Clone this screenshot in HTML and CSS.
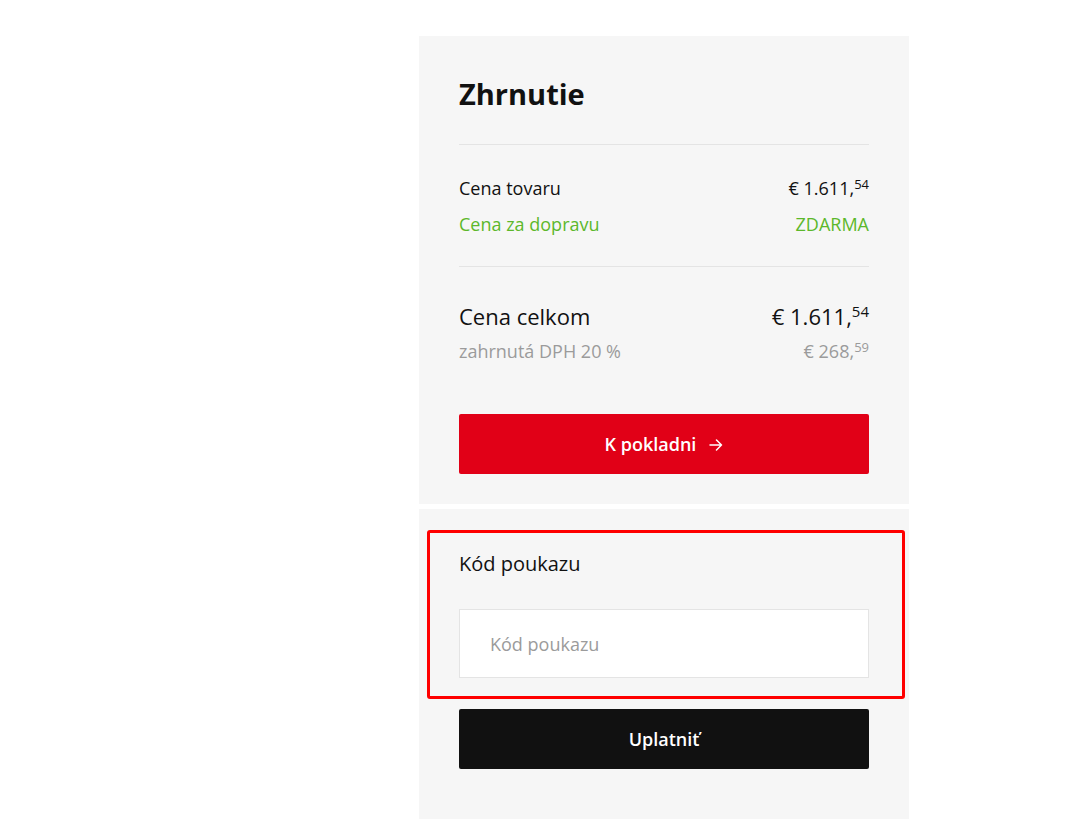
FILE: index.html
```html
<!DOCTYPE html>
<html lang="sk">
<head>
<meta charset="utf-8">
<title>Zhrnutie</title>
<link rel="stylesheet" href="styles.css">
</head>
<body>
<div class="page">
  <aside class="summary">
    <section class="panel panel-summary">
      <h2 class="title">Zhrnutie</h2>
      <div class="rows">
        <div class="row">
          <span>Cena tovaru</span>
          <span class="price">€ 1.611,<sup>54</sup></span>
        </div>
        <div class="row green">
          <span>Cena za dopravu</span>
          <span>ZDARMA</span>
        </div>
      </div>
      <div class="totals">
        <div class="row total">
          <span>Cena celkom</span>
          <span class="price">€ 1.611,<sup>54</sup></span>
        </div>
        <div class="row vat">
          <span>zahrnutá DPH 20 %</span>
          <span class="price">€ 268,<sup>59</sup></span>
        </div>
      </div>
      <button class="btn btn-red" type="button">K pokladni
        <svg class="arrow" width="14" height="12" viewBox="0 0 14 12" aria-hidden="true"><path d="M1 6h11.5M7.5 1l5 5-5 5" fill="none" stroke="#fff" stroke-width="1.5" stroke-linecap="round" stroke-linejoin="round"/></svg>
      </button>
    </section>
    <section class="panel panel-voucher">
      <div class="voucher-area">
        <div class="highlight"></div>
        <label class="voucher-label" for="kod">Kód poukazu</label>
        <input class="voucher-input" id="kod" type="text" placeholder="Kód poukazu">
      </div>
      <button class="btn btn-black" type="button">Uplatniť</button>
    </section>
  </aside>
</div>
</body>
</html>
```

FILE: styles.css
```css
* { box-sizing: border-box; }
html, body { margin: 0; padding: 0; background: #fff; }
body {
  font-family: "Open Sans", "Noto Sans", sans-serif;
  color: #111;
  font-size: 18px;
}
.page {
  padding: 36px 0 0 419px;
}
.summary {
  width: 490px;
  display: flex;
  flex-direction: column;
  gap: 5px;
}
.panel {
  background: #f6f6f6;
  padding: 40px 40px 30px;
}
.title {
  margin: 0;
  font-size: 29px;
  line-height: 36px;
  font-weight: 700;
  padding-bottom: 32px;
  border-bottom: 1px solid #e4e4e4;
}
.rows {
  padding: 31px 0 30px;
  display: flex;
  flex-direction: column;
  gap: 12px;
  border-bottom: 1px solid #e4e4e4;
}
.row {
  display: flex;
  justify-content: space-between;
  align-items: baseline;
  line-height: 24px;
}
.price sup {
  font-size: 13px;
  vertical-align: 0;
  position: relative;
  top: -6px;
  line-height: 0;
}
.green { color: #5cb82b; }
.totals {
  padding-top: 34px;
  display: flex;
  flex-direction: column;
  gap: 8px;
}
.total {
  font-size: 22px;
  line-height: 30px;
}
.total .price sup { font-size: 15px; top: -8px; }
.vat { color: #9b9b9b; }
.btn {
  display: flex;
  align-items: center;
  justify-content: center;
  gap: 13px;
  width: 100%;
  height: 60px;
  border: 0;
  border-radius: 2px;
  color: #fff;
  font-family: inherit;
  font-size: 18px;
  font-weight: 600;
  cursor: pointer;
}
.btn-red {
  margin-top: 51px;
  background: #e10017;
}
.arrow { margin-top: 1px; }
.panel-voucher {
  padding: 43px 40px 50px;
}
.voucher-area {
  position: relative;
  display: flex;
  flex-direction: column;
}
.highlight {
  position: absolute;
  left: -32px;
  right: -36px;
  top: -22px;
  bottom: -21px;
  border: 3px solid #ff0000;
  border-radius: 3px;
  pointer-events: none;
}
.voucher-label {
  font-size: 20px;
  line-height: 24px;
}
.voucher-input {
  margin-top: 33px;
  height: 69px;
  border: 1px solid #e4e4e4;
  background: #fff;
  padding: 0 30px;
  font-family: inherit;
  font-size: 18px;
  color: #111;
  outline: none;
}
.voucher-input::placeholder { color: #9b9b9b; }
.btn-black {
  margin-top: 31px;
  background: #111;
}
```
